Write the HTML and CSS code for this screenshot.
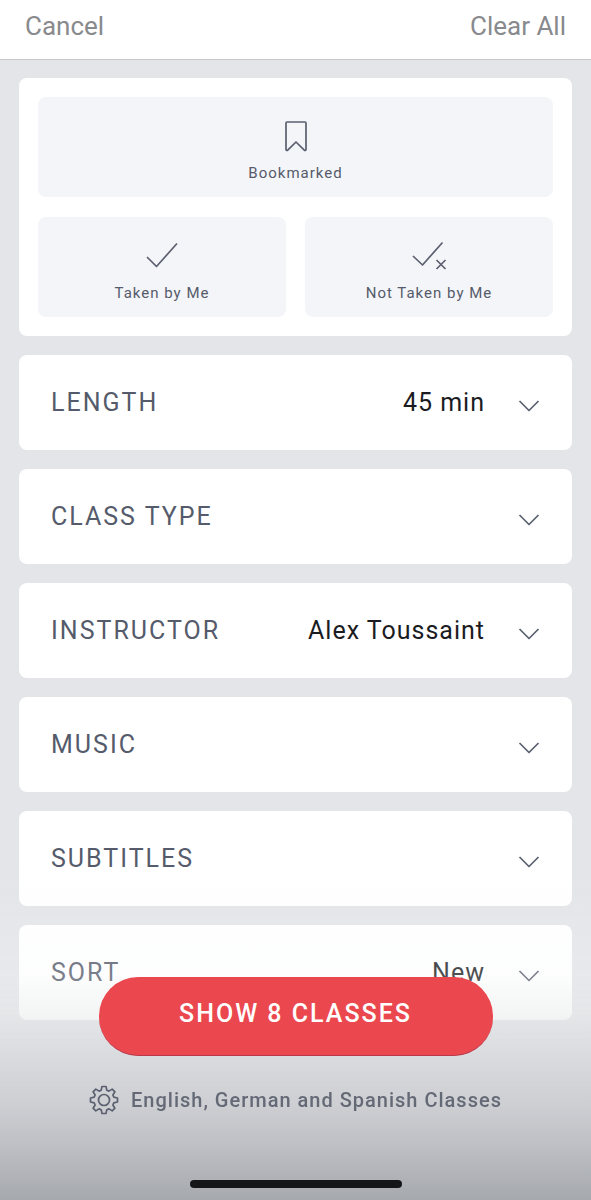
FILE: index.html
```html
<!DOCTYPE html>
<html lang="en">
<head>
  <meta charset="UTF-8" />
  <meta name="viewport" content="width=device-width, initial-scale=1" />
  <title>Filter Classes</title>
  <link rel="stylesheet" href="styles.css">
</head>
<body>

  <header class="topbar">
    <button type="button">Cancel</button>
    <button type="button">Clear All</button>
  </header>

  <main class="filters">
    <!-- Quick filters -->
    <section class="card quick">
      <button type="button" class="tile wide">
        <svg width="40" height="36" viewBox="0 0 40 36"><path d="M11 4h18a1 1 0 0 1 1 1v26.500a1 1 0 0 1-1.700.7L20 24l-8.300 8.200a1 1 0 0 1-1.700-.7V5a1 1 0 0 1 1-1z" /></svg>
        Bookmarked
      </button>
      <button type="button" class="tile">
        <svg width="40" height="36" viewBox="0 0 40 36"><path d="M5 19l9.500 9.500L35 5.500" /></svg>
        Taken by Me
      </button>
      <button type="button" class="tile">
        <svg width="40" height="36" viewBox="0 0 40 36"><path d="M4 18l9.500 9L33.500 4.500M27.500 22l9 9M36.500 22l-9 9" /></svg>
        Not Taken by Me
      </button>
    </section>

    <!-- Dropdown filters -->
    <button type="button" class="card row" aria-expanded="false">
      <span class="label">LENGTH</span><span class="value">45 min</span>
      <svg width="22" height="14" viewBox="0 0 22 14"><path d="M1.500 2l9.500 9.500L20.500 2" /></svg>
    </button>
    <button type="button" class="card row" aria-expanded="false">
      <span class="label">CLASS TYPE</span><span class="value"></span>
      <svg width="22" height="14" viewBox="0 0 22 14"><path d="M1.500 2l9.500 9.500L20.500 2" /></svg>
    </button>
    <button type="button" class="card row" aria-expanded="false">
      <span class="label">INSTRUCTOR</span><span class="value">Alex Toussaint</span>
      <svg width="22" height="14" viewBox="0 0 22 14"><path d="M1.500 2l9.500 9.500L20.500 2" /></svg>
    </button>
    <button type="button" class="card row" aria-expanded="false">
      <span class="label">MUSIC</span><span class="value"></span>
      <svg width="22" height="14" viewBox="0 0 22 14"><path d="M1.500 2l9.500 9.500L20.500 2" /></svg>
    </button>
    <button type="button" class="card row" aria-expanded="false">
      <span class="label">SUBTITLES</span><span class="value"></span>
      <svg width="22" height="14" viewBox="0 0 22 14"><path d="M1.500 2l9.500 9.500L20.500 2" /></svg>
    </button>
    <button type="button" class="card row" aria-expanded="false">
      <span class="label">SORT</span><span class="value">New</span>
      <svg width="22" height="14" viewBox="0 0 22 14"><path d="M1.500 2l9.500 9.500L20.500 2" /></svg>
    </button>
  </main>

  <footer class="bottom">
    <button type="button" class="show">SHOW 8 CLASSES</button>
    <a href="#" class="languages">
      <svg width="30" height="30" viewBox="0 0 30 30"><circle cx="15" cy="15" r="5.500" /><path d="M13 1.500h4l.8 3.700 2.200.9 3.200-2 2.700 2.700-2 3.200.9 2.200 3.700.8v4l-3.700.8-.9 2.200 2 3.200-2.700 2.700-3.200-2-2.200.9-.8 3.700h-4l-.8-3.700-2.200-.9-3.200 2-2.700-2.700 2-3.200-.9-2.200-3.700-.8v-4l3.700-.8.9-2.200-2-3.200 2.700-2.700 3.200 2 2.200-.9z" /></svg>
      English, German and Spanish Classes
    </a>
    <div class="home-bar"></div>
  </footer>

</body>
</html>
```
FILE: styles.css
```css
* { box-sizing: border-box; }
body { margin: 0; background: #e4e5e9; color: #555b6b; font-family: Roboto, "Liberation Sans", sans-serif; }
button { margin: 0; padding: 0; border: none; background: none; color: inherit; font: inherit; cursor: pointer; }
svg { fill: none; stroke: #5b6070; stroke-width: 1.7; stroke-linejoin: round; flex: none; }

.topbar { position: sticky; top: 0; display: flex; justify-content: space-between; padding: 11px 25px 17px; background: #fff; border-bottom: 1px solid #c6c9c9; font-size: 26px; line-height: 31px; color: #888a8d; }

.filters { display: flex; flex-direction: column; gap: 19px; padding: 18px 19px 182px; }
.card { background: #fff; border-radius: 8px; }

.quick { display: grid; grid-template-columns: 1fr 1fr; gap: 20px 19px; padding: 19px; }
.tile { display: flex; flex-direction: column; align-items: center; gap: 9px; padding: 21px 0 14px; background: #f4f5f8; border-radius: 8px; font-size: 15px; line-height: 20px; letter-spacing: 1px; }
.wide { grid-column: 1 / 3; }

.row { display: flex; align-items: center; padding: 32px; font-size: 25px; line-height: 31px; text-align: left; }
.label { letter-spacing: 2px; }
.value { flex: 1; padding-right: 33px; text-align: right; color: #1b1c22; letter-spacing: 1px; }
.row svg { margin-top: 6px; }

.bottom { position: fixed; left: 0; right: 0; bottom: 0; display: flex; flex-direction: column; align-items: center; padding: 117px 19px 12px; background: linear-gradient(rgba(255, 255, 255, 0), rgba(248, 249, 249, 0.22) 33%, rgba(230, 232, 233, 0.45) 45%, rgba(214, 216, 218, 0.7) 57%, rgba(203, 204, 208, 0.9) 72%, #b9bbc0 87%, #a6a9ad); }
.show { width: 394px; max-width: 100%; padding: 21px 0 26px; border-radius: 39px; border-bottom: 1px solid #b83a4b; background: #eb474e; color: #fff; font-size: 25px; font-weight: 500; line-height: 31px; letter-spacing: 2px; }
.languages { display: flex; align-items: center; gap: 12px; margin-top: 29px; color: #646976; font-size: 20px; font-weight: 500; line-height: 28px; letter-spacing: 1px; text-decoration: none; }
.home-bar { width: 212px; height: 8px; margin-top: 65px; border-radius: 4px; background: #151617; }
```
